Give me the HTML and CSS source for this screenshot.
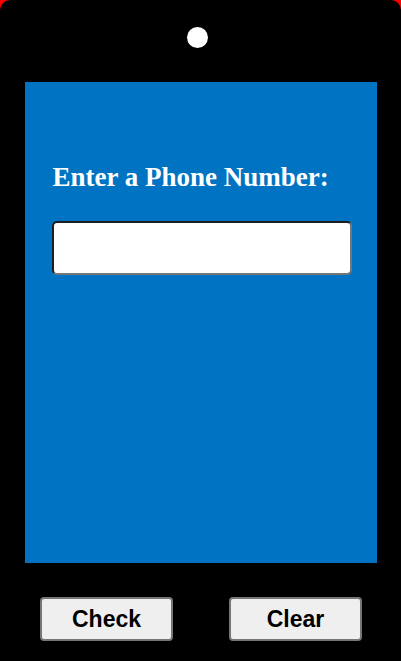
FILE: index.html
```html
<!DOCTYPE html>
<html>
<head>
<meta charset="utf-8">
<link rel="stylesheet" href="styles.css">
</head>
<body>
<div class="phone">
  <div class="camera"></div>
  <div class="screen">
    <h2 class="prompt">Enter a Phone Number:</h2>
    <input class="number" type="text">
  </div>
  <div class="controls">
    <button class="btn">Check</button>
    <button class="btn">Clear</button>
  </div>
</div>
</body>
</html>
```
FILE: styles.css
```css
html, body {
  margin: 0;
  padding: 0;
  background: #ff0000;
}
.phone {
  width: 401px;
  height: 661px;
  background: #000;
  border-radius: 10px 10px 0 0;
  display: flex;
  flex-direction: column;
  align-items: center;
  padding-top: 27px;
  box-sizing: border-box;
  overflow: hidden;
}
.camera {
  width: 21px;
  height: 21px;
  border-radius: 50%;
  background: #fff;
  margin-right: 6px;
}
.screen {
  margin-top: 34px;
  width: 352px;
  height: 481px;
  background: #0074c2;
  box-sizing: border-box;
  padding: 80px 0 0 28px;
}
.prompt {
  margin: 0;
  font-family: "Liberation Serif", "Times New Roman", serif;
  font-weight: bold;
  font-size: 27px;
  line-height: 31px;
  color: #fff;
}
.number {
  display: block;
  margin-top: 28px;
  margin-left: -1px;
  width: 300px;
  height: 54px;
  box-sizing: border-box;
  border: 2px solid;
  border-color: #1e1e1e #767676 #767676 #1e1e1e;
  border-radius: 5px;
  background: #fff;
  outline: none;
}
.controls {
  margin-top: 34px;
  width: 100%;
  box-sizing: border-box;
  display: flex;
  justify-content: space-between;
  padding: 0 39px 0 40px;
}
.btn {
  width: 133px;
  height: 44px;
  box-sizing: border-box;
  background: #efefef;
  border: 2px solid #767676;
  border-radius: 4px;
  font-family: "Liberation Sans", Arial, sans-serif;
  font-weight: bold;
  font-size: 23px;
  color: #000;
  padding: 0;
}
```
